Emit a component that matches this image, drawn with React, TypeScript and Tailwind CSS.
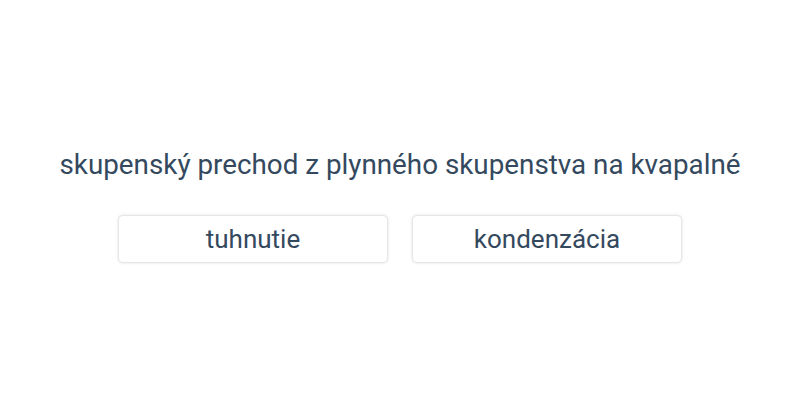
export default function App() {
  const options = ["tuhnutie", "kondenzácia"];
  return (
    <div
      className="flex h-[400px] w-[800px] flex-col items-center bg-white pt-[147px] text-[#34495e]"
      style={{ fontFamily: "Roboto, sans-serif" }}
    >
      <h1 className="text-[27.8px] leading-9 font-normal">
        skupenský prechod z plynného skupenstva na kvapalné
      </h1>
      <div className="mt-8 flex gap-6">
        {options.map((o) => (
          <button
            key={o}
            className="h-12 w-[270px] rounded-[5px] border border-[#e6e6e6] bg-white text-[26px] text-[#34495e] shadow-[0_0_3px_rgba(0,0,0,0.12)]"
          >
            {o}
          </button>
        ))}
      </div>
    </div>
  );
}
